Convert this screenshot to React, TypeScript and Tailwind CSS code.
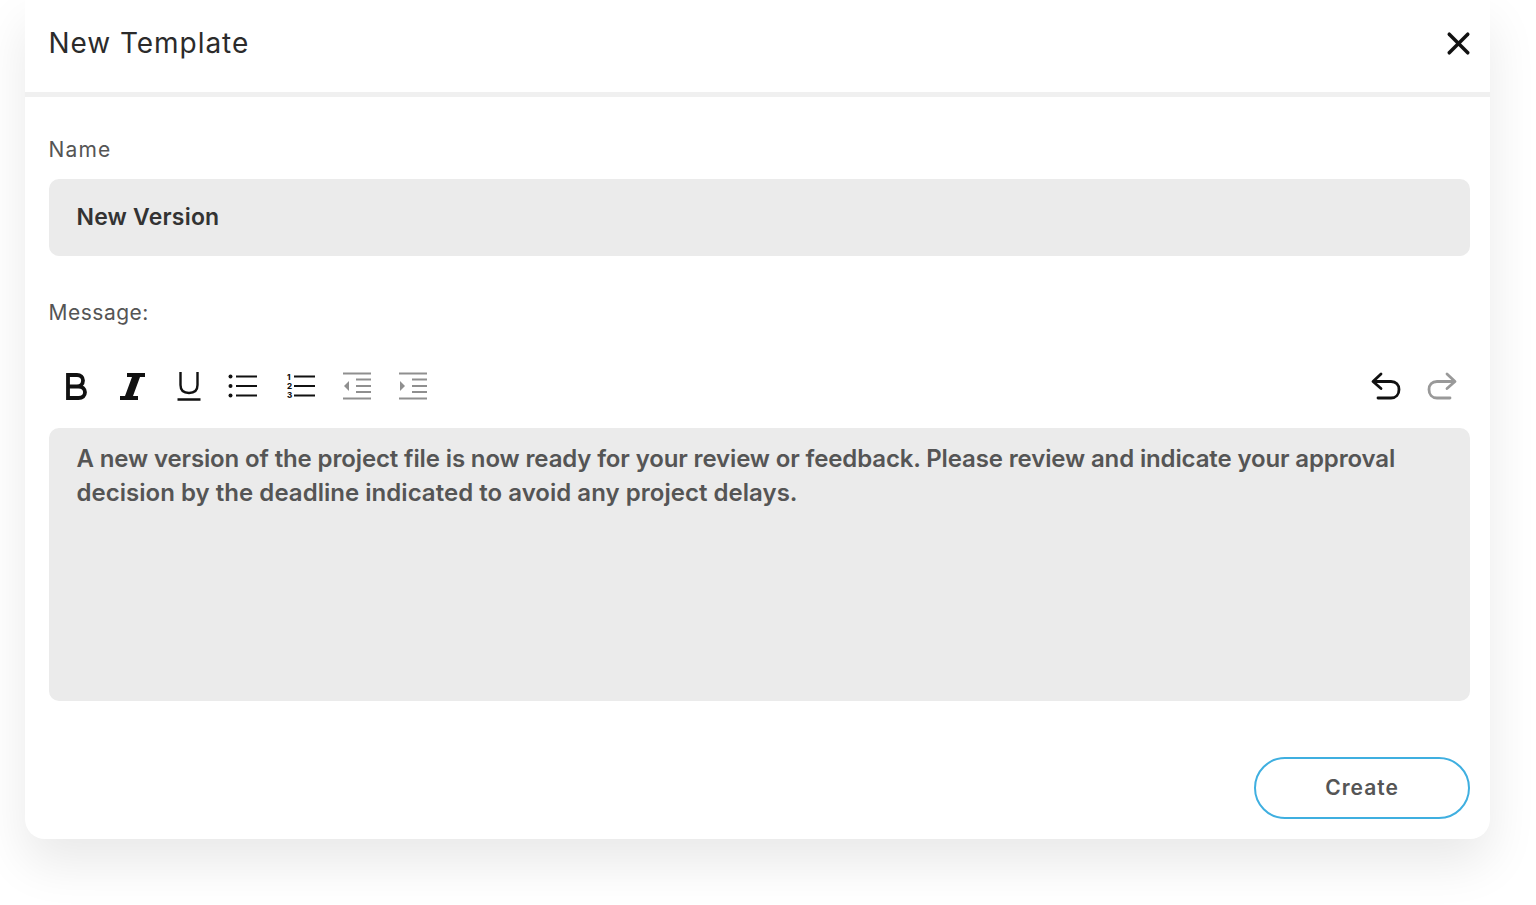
import React from "react";
import { X } from "lucide-react";

const FONT = "font-['Inter','Liberation_Sans',sans-serif]";

function ListIcon({ ordered }: { ordered?: boolean }) {
  return (
    <svg width="32" height="28" viewBox="0 0 32 28" fill="none" stroke="#111" strokeWidth="2.2">
      <path d="M9 4.500h21M9 14h21M9 23.500h21" />
      {ordered ? (
        <g fontFamily="Inter, sans-serif" fontSize="8" fontWeight="800" fill="#111" stroke="none">
          <text x="2" y="7.500">1</text>
          <text x="2" y="16.500">2</text>
          <text x="2" y="26">3</text>
        </g>
      ) : (
        <g fill="#111" stroke="none">
          <circle cx="3.500" cy="4.500" r="2" />
          <circle cx="3.500" cy="14" r="2" />
          <circle cx="3.500" cy="23.500" r="2" />
        </g>
      )}
    </svg>
  );
}

function IndentIcon({ right }: { right?: boolean }) {
  return (
    <svg width="30" height="28" viewBox="0 0 30 28" fill="none" stroke="#8f8f8f" strokeWidth="2.200">
      <path d="M1 1.500h28M14 7.500h15M14 14h15M14 20h15M1 26.500h28" />
      <path d={right ? "M2 9l5 5-5 5z" : "M7 9l-5 5 5 5z"} fill="#8f8f8f" stroke="none" />
    </svg>
  );
}

export default function App() {
  return (
    <div className={`${FONT} w-[1536px] h-[905px] bg-white overflow-hidden`}>
      <div className="ml-[25px] w-[1465px] h-[839px] bg-white rounded-b-[20px] shadow-[0_24px_50px_rgba(0,0,0,0.09)] flex flex-col">
        {/* Header */}
        <div className="h-[97px] shrink-0 border-b-[5px] border-[#f0f0f0] flex items-center justify-between pl-[23.5px] pr-[13px] pb-[6px]">
          <h2 className="text-[28px] font-normal text-[#2b2b2b] tracking-[0.95px]">New Template</h2>
          <X className="size-[37px] text-[#111]" strokeWidth={2.3} />
        </div>

        <div className="flex-1 flex flex-col pl-[23.5px] pr-5">
          <label className="mt-[40px] text-[21px] leading-[26px] text-[#555] tracking-[1.2px]">Name</label>
          <div className="mt-[16px] h-[77px] rounded-[10px] bg-[#ebebeb] flex items-center px-7 text-[23px] font-semibold text-[#333] tracking-[0.2px]">
            New Version
          </div>

          <label className="mt-[44px] text-[21px] leading-[26px] text-[#555] tracking-[0.5px]">Message:</label>

          {/* Toolbar */}
          <div className="mt-[44px] h-[58px] flex items-start justify-between">
            <div className="flex items-center gap-[25.5px] pl-[14.5px] text-[#111]">
              <svg className="mr-[3.5px]" width="26" height="32" viewBox="0 0 26 32" fill="none" stroke="#111" strokeWidth="3.800">
                <path d="M5 5h9c3.500 0 6 2 6 5.500s-2.500 6-6 6H5zM5 16.500h10.500c4 0 6.500 2.300 6.500 5.800s-2.500 5.700-6.500 5.700H5z" />
              </svg>
              <svg width="32" height="32" viewBox="0 0 32 32" fill="#111" stroke="none">
                <path d="M9 3h18v4h-5l-7 19h5v4H2v-4h5l7-19H9z" />
              </svg>
              <svg width="26" height="32" viewBox="0 0 26 32" fill="none" stroke="#111" strokeWidth="2.400">
                <path d="M4.500 2v13c0 5 3 8 8.500 8s8.500-3 8.500-8V2M1.500 29.500h23" />
              </svg>
              <ListIcon />
              <ListIcon ordered />
              <IndentIcon />
              <IndentIcon right />
            </div>
            <div className="mt-[2px] flex items-center gap-[24px] pr-[12px]">
              <svg width="32" height="30" viewBox="0 0 32 30" fill="none" stroke="#111" strokeWidth="2.800" strokeLinecap="round" strokeLinejoin="round">
                <path d="M11 2L3 9.500l8 7M3.500 9.500H21c5 0 8 3 8 8s-3 8.500-8 8.500H8" />
              </svg>
              <svg width="32" height="30" viewBox="0 0 32 30" fill="none" stroke="#999" strokeWidth="2.800" strokeLinecap="round" strokeLinejoin="round">
                <path d="M21 2l8 7.500-8 7M28.500 9.500H11c-5 0-8 3-8 8s3 8.500 8 8.500h13" />
              </svg>
            </div>
          </div>

          {/* Editor */}
          <div className="h-[273px] rounded-[10px] bg-[#ebebeb] px-7 pt-[14px] text-[24px] leading-[34px] font-semibold text-[#555] tracking-[-0.13px]">
            A new version of the project file is now ready for your review or feedback. Please review and indicate your approval{" "}
            <span className="tracking-[0.03px]">decision by the deadline indicated to avoid any project delays.</span>
          </div>

          <div className="mt-[56px] flex justify-end">
            <button className="w-[216px] h-[62px] rounded-full border-2 border-[#3fafe0] bg-white text-[21px] font-semibold text-[#555] tracking-[1px]">
              Create
            </button>
          </div>
        </div>
      </div>
    </div>
  );
}
